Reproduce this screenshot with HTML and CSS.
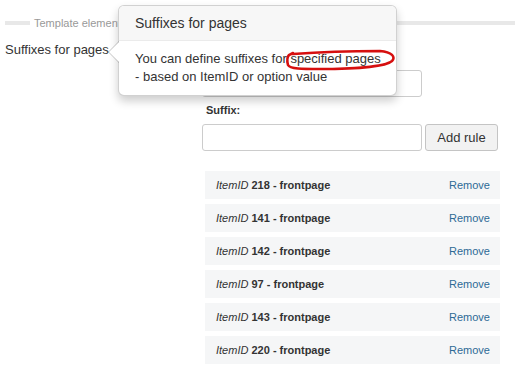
FILE: index.html
```html
<!DOCTYPE html>
<html lang="en">

<head>
    <meta charset="utf-8">
    <title>Suffixes for pages</title>
    <link rel="stylesheet" href="styles.css">
</head>

<body>

    <div class="page">
        <div class="legend">
            <span class="legend-line short"></span>
            <span class="legend-text">Template elements</span>
            <span class="legend-line long"></span>
        </div>

        <div class="field">
            <label class="field-label">Suffixes for pages</label>

            <div class="controls">
                <label class="small-label first">ItemID:</label>
                <input type="text" class="text-input">

                <label class="small-label">Suffix:</label>
                <div class="input-row">
                    <input type="text" class="text-input">
                    <button class="btn">Add rule</button>
                </div>

                <ul class="rules">
                    <li class="rule"><span><i>ItemID</i> <b>218 - frontpage</b></span><a href="#">Remove</a></li>
                    <li class="rule"><span><i>ItemID</i> <b>141 - frontpage</b></span><a href="#">Remove</a></li>
                    <li class="rule"><span><i>ItemID</i> <b>142 - frontpage</b></span><a href="#">Remove</a></li>
                    <li class="rule"><span><i>ItemID</i> <b>97 - frontpage</b></span><a href="#">Remove</a></li>
                    <li class="rule"><span><i>ItemID</i> <b>143 - frontpage</b></span><a href="#">Remove</a></li>
                    <li class="rule"><span><i>ItemID</i> <b>220 - frontpage</b></span><a href="#">Remove</a></li>
                </ul>
            </div>
        </div>

        <!-- popover over the label -->
        <div class="popover">
            <div class="arrow"></div>
            <h3 class="popover-title">Suffixes for pages</h3>
            <div class="popover-content">You can define suffixes for specified pages<br>- based on ItemID or option value</div>
        </div>

        <svg class="scribble" width="124" height="32" viewBox="0 0 124 32">
            <path d="M13 9 C 40 7, 80 6, 100 6 C 112 7, 116 12, 112 16 C 105 22, 70 24, 40 24 C 22 24, 10 24, 8 20 C 7 16, 7 12, 9 10 L 13 8"
                fill="none" stroke="#d60f0f" stroke-width="2.6" stroke-linecap="round" />
        </svg>
    </div>

</body>

</html>
```

FILE: styles.css
```css
body {
    margin: 0;
    background-color: white;
    font-family: "Liberation Sans", Arial, sans-serif;
    color: #333;
}

.page {
    position: relative;
    width: 515px;
    height: 380px;
    overflow: hidden;
}

.legend {
    display: flex;
    align-items: center;
    height: 46px;
    padding-left: 5px;
}

.legend-line {
    height: 4px;
    background-color: #e8e8e8;
}

.legend-line.short {
    width: 25px;
}

.legend-line.long {
    flex: 1;
}

.legend-text {
    font-size: 11px;
    color: #999;
    padding: 0 4px;
}

.field {
    display: grid;
    grid-template-columns: 197px 300px;
    padding-left: 5px;
}

.field-label {
    font-size: 13px;
    line-height: 20px;
    margin-top: -6px;
}

.controls {
    display: flex;
    flex-direction: column;
}

.small-label {
    font-size: 11px;
    font-weight: 700;
    line-height: 15px;
    margin-top: 6px;
    margin-bottom: 6px;
    padding-left: 4px;
}

.small-label.first {
    margin-top: 3px;
}

.text-input {
    box-sizing: border-box;
    width: 220px;
    height: 27px;
    margin: 0;
    border: 1px solid #ccc;
    border-radius: 3px;
    background-color: white;
}

.input-row {
    display: flex;
    gap: 3px;
}

.btn {
    box-sizing: border-box;
    width: 73px;
    height: 27px;
    margin: 0;
    font-family: "Liberation Sans", Arial, sans-serif;
    font-size: 13px;
    color: #333;
    background-color: #f2f2f2;
    border: 1px solid #c4c4c4;
    border-radius: 3px;
}

.rules {
    list-style: none;
    margin: 20px 0 0 3px;
    padding: 0;
    width: 295px;
    display: flex;
    flex-direction: column;
    gap: 5px;
}

.rule {
    display: flex;
    justify-content: space-between;
    align-items: center;
    height: 28px;
    padding: 0 10px 0 11px;
    background-color: #f5f6f7;
    font-size: 11px;
}

.rule b {
    color: #333;
}

.rule a {
    color: #2d6a96;
    text-decoration: none;
}

.popover {
    position: absolute;
    left: 118px;
    top: 5px;
    width: 279px;
    box-sizing: border-box;
    background-color: white;
    border: 1px solid rgba(0, 0, 0, 0.18);
    border-radius: 6px;
    box-shadow: 0 5px 10px rgba(0, 0, 0, 0.2);
}

.popover-title {
    margin: 0;
    padding: 8px 16px;
    font-size: 14px;
    font-weight: 400;
    line-height: 18px;
    background-color: #f7f7f7;
    border-bottom: 1px solid #ebebeb;
    border-radius: 5px 5px 0 0;
}

.popover-content {
    padding: 9px 0 9px 16px;
    font-size: 13px;
    line-height: 18px;
    white-space: nowrap;
}

.arrow {
    position: absolute;
    left: -11px;
    top: 35px;
    width: 0;
    height: 0;
    border-style: solid;
    border-width: 11px 11px 11px 0;
    border-color: transparent rgba(0, 0, 0, 0.22) transparent transparent;
}

.arrow::after {
    content: "";
    position: absolute;
    left: 1px;
    top: -10px;
    border-style: solid;
    border-width: 10px 10px 10px 0;
    border-color: transparent white transparent transparent;
}

.scribble {
    position: absolute;
    left: 280px;
    top: 45px;
}
```
